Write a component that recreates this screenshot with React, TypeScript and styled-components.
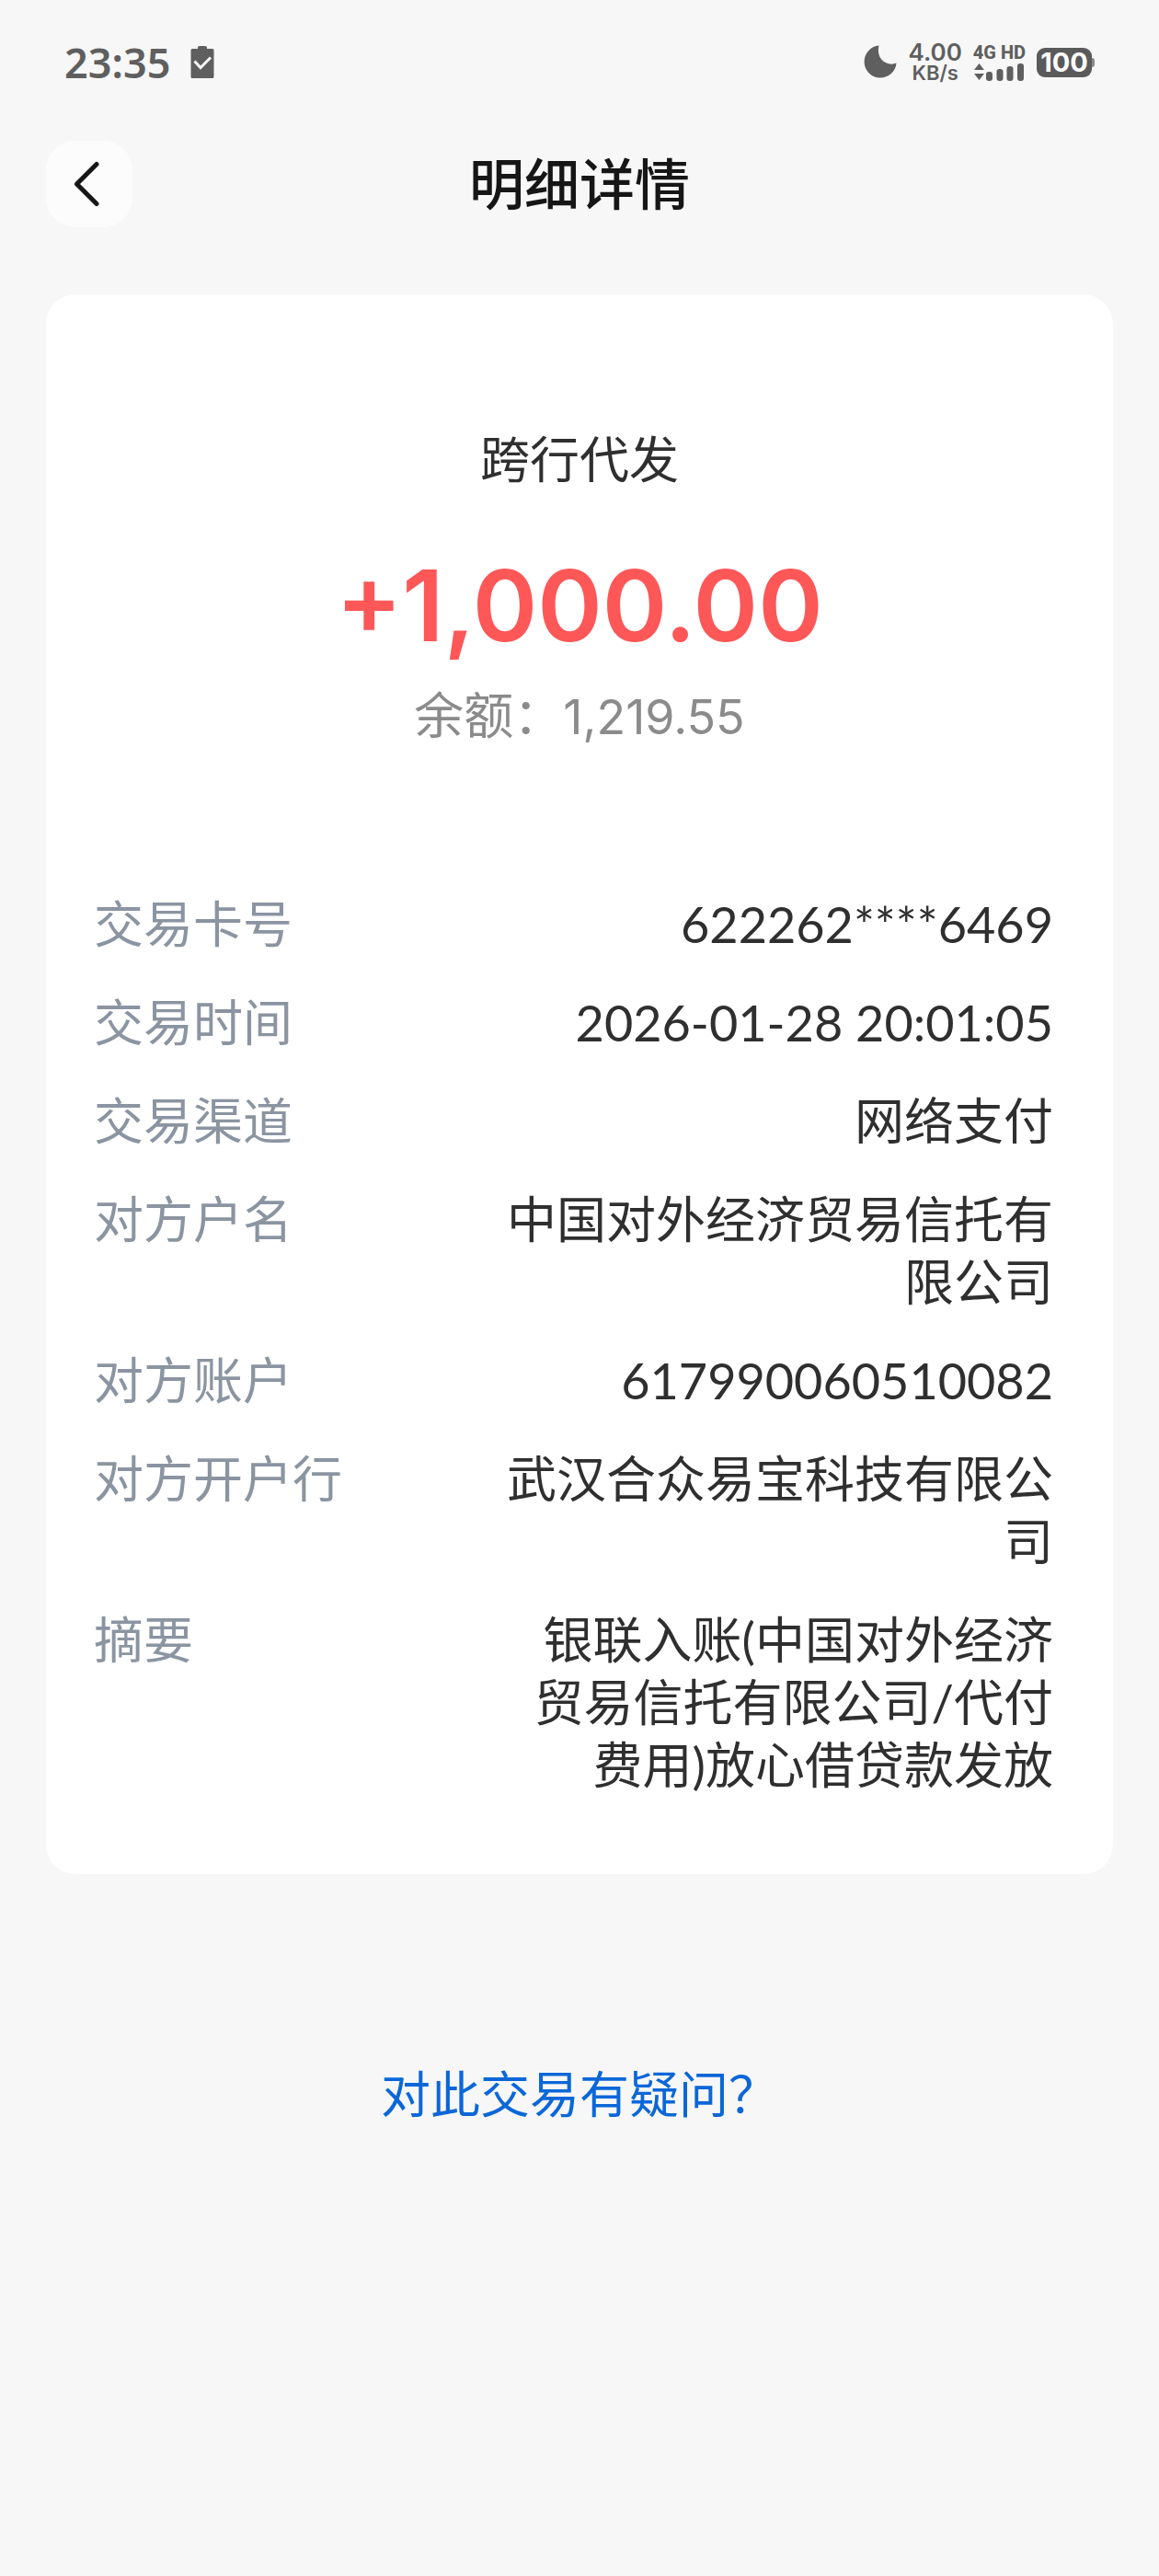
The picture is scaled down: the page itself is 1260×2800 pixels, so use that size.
import React from "react";
import styled, { createGlobalStyle } from "styled-components";

const GlobalStyle = createGlobalStyle`
  *, *::before, *::after { box-sizing: border-box; }
  body {
    margin: 0;
    background: #f7f7f7;
    color: #2f2f2f;
    font-family: Lato, "Noto Sans CJK SC", sans-serif;
  }
`;

const Page = styled.div`
  min-height: 100vh;
  display: flex;
  flex-direction: column;
  background: #f7f7f7;
`;

const StatusBar = styled.div`
  height: 136px;
  padding: 0 70px;
  display: flex;
  align-items: center;
  justify-content: space-between;
  color: #5f5f5f;
`;

const StatusGroup = styled.div<{ $gap: number }>`
  display: flex;
  align-items: center;
  gap: ${(p) => p.$gap}px;
`;

const Clock = styled.time`
  font: 600 45px/48px "Noto Sans", sans-serif;
`;

const Stack = styled.div<{ $gap: number }>`
  display: flex;
  flex-direction: column;
  align-items: center;
  gap: ${(p) => p.$gap}px;
`;

const Speed = styled.span<{ $size: number }>`
  font: 600 ${(p) => p.$size}px/22px Inter, sans-serif;
`;

const Network = styled.span`
  font: 800 20px/18px Roboto, sans-serif;
`;

const Battery = styled.div`
  display: flex;
  align-items: center;

  &::after {
    content: "";
    width: 3px;
    height: 10px;
    border-radius: 0 3px 3px 0;
    background: #8a8a8a;
  }
`;

const BatteryLevel = styled.span`
  width: 60px;
  border-radius: 9px;
  background: #5a5a5a;
  color: #fff;
  text-align: center;
  font: 700 29px/32px Inter, sans-serif;
`;

const Header = styled.header`
  height: 128px;
  padding: 0 50px;
  display: grid;
  grid-template-columns: 94px 1fr 94px;
  align-items: center;
`;

const BackButton = styled.button`
  width: 94px;
  height: 94px;
  padding: 0 6px 0 0;
  border: 0;
  border-radius: 32px;
  background: #fcfcfc;
  display: grid;
  place-items: center;
  cursor: pointer;
`;

const Title = styled.h1`
  margin: 0;
  text-align: center;
  font-size: 60px;
  line-height: 70px;
  font-weight: 500;
  color: #161616;
`;

const Card = styled.main`
  margin: 56px 50px 0;
  padding: 146px 65px 84px 52px;
  border-radius: 32px;
  background: #fff;
`;

const Summary = styled.section`
  display: flex;
  flex-direction: column;
  align-items: center;
  margin-right: -13px;
`;

const Kind = styled.p`
  margin: 0;
  font-size: 54px;
  line-height: 68px;
`;

const Amount = styled.p`
  margin: 64px 0 26px;
  font: 600 107px/120px Inter, sans-serif;
  color: #fd5758;
`;

const Balance = styled.p`
  margin: 0;
  font-size: 54px;
  line-height: 68px;
  color: #8b8b8b;
`;

const BalanceValue = styled.span`
  font-family: Inter, sans-serif;
  font-size: 52px;
`;

const Details = styled.dl`
  margin: 157px 0 0;
  display: flex;
  flex-direction: column;
  gap: 39px;
`;

const Row = styled.div`
  display: flex;
  justify-content: space-between;
  font-size: 54px;
  line-height: 68px;
`;

const Label = styled.dt`
  color: #8b94a1;
  white-space: nowrap;
`;

const Value = styled.dd`
  margin: 0;
  max-width: 58%;
  text-align: right;
`;

const Footer = styled.footer`
  margin-top: 206px;
  text-align: center;
`;

const HelpLink = styled.a`
  font-size: 54px;
  line-height: 68px;
  color: #0b67d8;
  text-decoration: none;
`;

const details: [string, string][] = [
  ["交易卡号", "622262****6469"],
  ["交易时间", "2026-01-28 20:01:05"],
  ["交易渠道", "网络支付"],
  ["对方户名", "中国对外经济贸易信托有限公司"],
  ["对方账户", "617990060510082"],
  ["对方开户行", "武汉合众易宝科技有限公司"],
  ["摘要", "银联入账(中国对外经济贸易信托有限公司/代付费用)放心借贷款发放"],
];

const ClipboardIcon = () => (
  <svg width="26" height="38" viewBox="0 0 26 38" aria-hidden="true">
    <path
      fill="currentColor"
      d="M2 4h6V2.500Q8 1 10 1h6q2 0 2 1.500V4h6q1.500 0 1.500 1.500v29q0 1.500-1.500 1.500H2q-1.500 0-1.500-1.500v-29Q.5 4 2 4Z"
    />
    <path d="M4.500 17.500l6.500 7L22 13.500" fill="none" stroke="#f7f7f7" strokeWidth="3" />
  </svg>
);

const MoonIcon = () => (
  <svg width="36" height="38" viewBox="0 0 36 38" aria-hidden="true">
    <path
      fill="currentColor"
      d="M16.500.600A17.500 17.500 0 1 0 35.500 19.500C27 23.500 13 17 16.500.600Z"
    />
  </svg>
);

const SignalIcon = () => (
  <svg width="54" height="20" viewBox="0 0 54 20" fill="currentColor" aria-hidden="true">
    <path d="M5.500 1l5.500 7H0ZM5.500 19l5.500-7H0Z" />
    <rect x="13" y="10" width="7" height="10" rx="3" />
    <rect x="24.500" y="7" width="7" height="13" rx="3" />
    <rect x="35.500" y="4" width="7" height="16" rx="3" />
    <rect x="47" y="1" width="7" height="19" rx="3" />
  </svg>
);

const BackIcon = () => (
  <svg width="28" height="50" viewBox="0 0 28 50" fill="none" aria-hidden="true">
    <path
      d="M25 3.500L3.500 25 25 46.500"
      stroke="#161616"
      strokeWidth="5"
      strokeLinecap="round"
      strokeLinejoin="round"
    />
  </svg>
);

export default function App() {
  return (
    <Page>
      <GlobalStyle />
      <StatusBar>
        <StatusGroup $gap={22}>
          <Clock>23:35</Clock>
          <ClipboardIcon />
        </StatusGroup>
        <StatusGroup $gap={12}>
          <MoonIcon />
          <Stack $gap={0}>
            <Speed $size={26}>4.00</Speed>
            <Speed $size={22}>KB/s</Speed>
          </Stack>
          <Stack $gap={2}>
            <Network>4G HD</Network>
            <SignalIcon />
          </Stack>
          <Battery>
            <BatteryLevel>100</BatteryLevel>
          </Battery>
        </StatusGroup>
      </StatusBar>
      <Header>
        <BackButton type="button" aria-label="返回">
          <BackIcon />
        </BackButton>
        <Title>明细详情</Title>
      </Header>
      <Card>
        <Summary>
          <Kind>跨行代发</Kind>
          <Amount>+1,000.00</Amount>
          <Balance>
            余额：<BalanceValue>1,219.55</BalanceValue>
          </Balance>
        </Summary>
        <Details>
          {details.map(([label, value]) => (
            <Row key={label}>
              <Label>{label}</Label>
              <Value>{value}</Value>
            </Row>
          ))}
        </Details>
      </Card>
      <Footer>
        <HelpLink href="#help">对此交易有疑问？</HelpLink>
      </Footer>
    </Page>
  );
}
